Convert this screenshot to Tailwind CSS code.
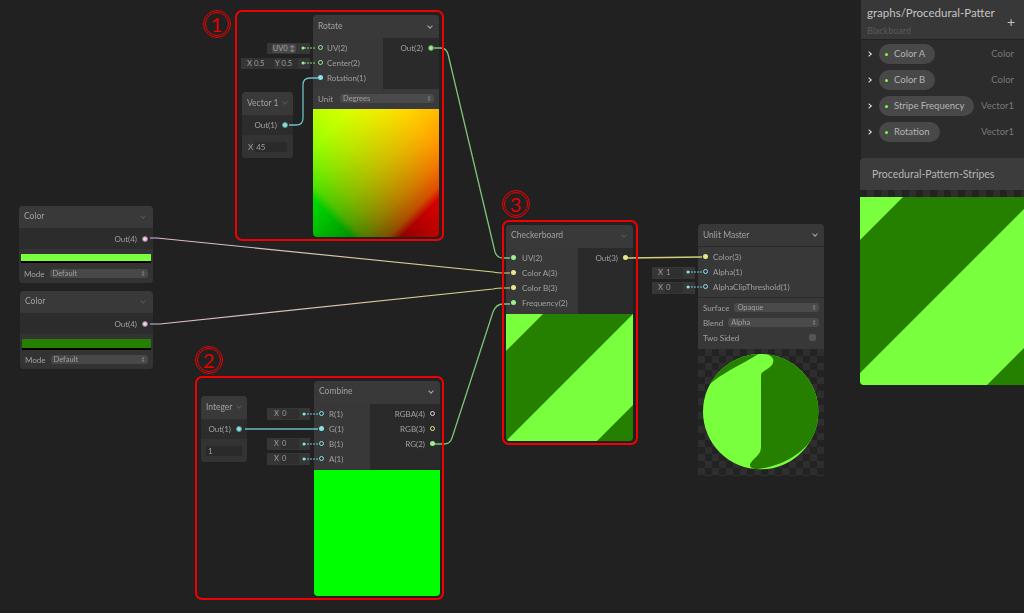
<!DOCTYPE html>
<html lang="en">
<head>
  <meta charset="UTF-8" />
  <title>Procedural Pattern Stripes</title>
  <script src="https://cdn.jsdelivr.net/npm/@tailwindcss/browser@4"></script>
</head>
<body class="bg-[#212121]">
  <div class="relative w-[1024px] h-[613px] overflow-hidden font-['Lato',sans-serif] text-[8px] leading-none text-[#a0a0a0]">

    <!-- Color nodes -->
    <div class="absolute left-[19px] top-[206px] w-[134px] h-[77px] rounded bg-[#2c2c2c] flex flex-col overflow-hidden">
      <div class="h-[22px] shrink-0 bg-[#393939] flex items-center justify-between px-[5px] pb-[1px] text-[8.5px]"><span>Color</span><span class="w-[4px] h-[4px] mr-[3px] mb-[2px] border-r border-b border-[#555] rotate-45"></span></div>
      <div class="h-[21px] shrink-0 flex items-center justify-end gap-[5px] pr-[5px]"><span>Out(4)</span><span class="w-[6px] h-[6px] rounded-full bg-[#f3c9ee] border border-[#8d7689]"></span></div>
      <div class="h-[18px] shrink-0 bg-[#333] px-[2px] pt-[5px]"><div class="h-[9px] bg-[#79ff3d] border-b-2 border-black"></div></div>
      <div class="flex-1 bg-[#333] flex items-center gap-[5px] px-[5px] pb-[3px]"><span>Mode</span><div class="flex-1 h-[9px] rounded-[3px] bg-[#484848] flex items-center justify-between px-[3px] text-[7.5px]"><span>Default</span><span class="text-[5px]">&#8597;</span></div></div>
    </div>
    <div class="absolute left-[20px] top-[291px] w-[133px] h-[78px] rounded bg-[#2c2c2c] flex flex-col overflow-hidden">
      <div class="h-[22px] shrink-0 bg-[#393939] flex items-center justify-between px-[5px] pb-[1px] text-[8.5px]"><span>Color</span><span class="w-[4px] h-[4px] mr-[3px] mb-[2px] border-r border-b border-[#555] rotate-45"></span></div>
      <div class="h-[21px] shrink-0 flex items-center justify-end gap-[5px] pr-[5px]"><span>Out(4)</span><span class="w-[6px] h-[6px] rounded-full bg-[#f3c9ee] border border-[#8d7689]"></span></div>
      <div class="h-[18px] shrink-0 bg-[#333] px-[2px] pt-[5px]"><div class="h-[9px] bg-[#258000] border-b-2 border-black box-content"></div></div>
      <div class="flex-1 bg-[#333] flex items-center gap-[5px] px-[5px] pb-[2px]"><span>Mode</span><div class="flex-1 h-[9px] rounded-[3px] bg-[#484848] flex items-center justify-between px-[3px] text-[7.5px]"><span>Default</span><span class="text-[5px]">&#8597;</span></div></div>
    </div>

    <!-- Vector 1 -->
    <div class="absolute left-[242px] top-[92px] w-[51px] h-[66px] rounded bg-[#2c2c2c] flex flex-col overflow-hidden">
      <div class="h-[23px] shrink-0 bg-[#393939] flex items-center justify-between px-[5px] pb-[1px] text-[8.5px]"><span>Vector 1</span><span class="w-[4px] h-[4px] mr-[1px] mb-[2px] border-r border-b border-[#555] rotate-45"></span></div>
      <div class="h-[20px] shrink-0 flex items-center justify-end gap-[5px] pr-[5px]"><span>Out(1)</span><span class="w-[6px] h-[6px] rounded-full bg-[#84e4e7] border border-[#5a8f91]"></span></div>
      <div class="flex-1 bg-[#333] flex items-center gap-[2px] px-[6px]"><span>X</span><span class="flex-1 h-[10px] bg-[#2a2a2a] flex items-center pl-[1px]">45</span></div>
    </div>

    <!-- Rotate -->
    <div class="absolute left-[313px] top-[15px] w-[126px] h-[222px] rounded bg-[#2a2a2a] flex flex-col overflow-hidden">
      <div class="h-[23px] shrink-0 bg-[#393939] flex items-center justify-between px-[5px] text-[8.5px]"><span>Rotate</span><span class="w-[4px] h-[4px] mr-[2px] mb-[2px] border-r border-b border-[#aaa] rotate-45"></span></div>
      <div class="h-[51px] shrink-0 flex">
        <div class="w-[70px] bg-[#383838] flex flex-col pt-[2px]">
          <div class="h-[15px] flex items-center gap-[4px] pl-[5px]"><span class="w-[5px] h-[5px] rounded-full border border-[#9aef92]"></span><span>UV(2)</span></div>
          <div class="h-[15px] flex items-center gap-[4px] pl-[5px]"><span class="w-[5px] h-[5px] rounded-full border border-[#9aef92]"></span><span>Center(2)</span></div>
          <div class="h-[15px] flex items-center gap-[4px] pl-[5px]"><span class="w-[5px] h-[5px] rounded-full bg-[#84e4e7]"></span><span>Rotation(1)</span></div>
        </div>
        <div class="flex-1 pt-[2px]"><div class="h-[15px] flex items-center justify-end gap-[5px] pr-[5px]"><span>Out(2)</span><span class="w-[6px] h-[6px] rounded-full bg-[#9aef92] border border-[#5f8f5b]"></span></div></div>
      </div>
      <div class="h-[20px] shrink-0 bg-[#3a3a3a] flex items-center gap-[7px] px-[5px] pb-[1px]"><span>Unit</span><div class="flex-1 h-[9px] rounded-[3px] bg-[#4a4a4a] flex items-center justify-between px-[3px] text-[7.5px]"><span>Degrees</span><span class="text-[5px]">&#8597;</span></div></div>
      <div class="relative flex-1 bg-black">
        <div class="absolute inset-0 bg-[linear-gradient(to_top_right,#000_15%,#4d0000_20%,#7d0000_30%,#9f0000_40%,#bb0000_50%,#d10000_60%,#e60000_70%,#f00_85%)]"></div>
        <div class="absolute inset-0 mix-blend-plus-lighter bg-[linear-gradient(to_top_left,#000_15%,#004d00_20%,#007d00_30%,#009f00_40%,#00bb00_50%,#00d100_60%,#00e600_70%,#0f0_85%)]"></div>
      </div>
    </div>

    <!-- Integer -->
    <div class="absolute left-[201px] top-[396px] w-[46px] h-[66px] rounded bg-[#2c2c2c] flex flex-col overflow-hidden">
      <div class="h-[23px] shrink-0 bg-[#393939] flex items-center justify-between px-[5px] pb-[1px] text-[8.5px]"><span>Integer</span><span class="w-[4px] h-[4px] mr-[1px] mb-[2px] border-r border-b border-[#555] rotate-45"></span></div>
      <div class="h-[20px] shrink-0 flex items-center justify-end gap-[5px] pr-[5px]"><span>Out(1)</span><span class="w-[6px] h-[6px] rounded-full bg-[#84e4e7] border border-[#5a8f91]"></span></div>
      <div class="flex-1 bg-[#333] flex items-center px-[5px]"><span class="w-full h-[10px] bg-[#2a2a2a] flex items-center pl-[2px]">1</span></div>
    </div>

    <!-- Combine -->
    <div class="absolute left-[314px] top-[381px] w-[126px] h-[215px] rounded bg-[#2a2a2a] flex flex-col overflow-hidden">
      <div class="h-[23px] shrink-0 bg-[#393939] flex items-center justify-between px-[5px] pb-[2px] text-[8.5px]"><span>Combine</span><span class="w-[4px] h-[4px] mr-[2px] mb-[2px] border-r border-b border-[#aaa] rotate-45"></span></div>
      <div class="h-[66px] shrink-0 flex">
        <div class="w-[56px] bg-[#383838] flex flex-col pt-[2px]">
          <div class="h-[15px] flex items-center gap-[5px] pl-[5px]"><span class="w-[5px] h-[5px] rounded-full border border-[#84e4e7]"></span><span>R(1)</span></div>
          <div class="h-[15px] flex items-center gap-[5px] pl-[5px]"><span class="w-[5px] h-[5px] rounded-full bg-[#84e4e7]"></span><span>G(1)</span></div>
          <div class="h-[15px] flex items-center gap-[5px] pl-[5px]"><span class="w-[5px] h-[5px] rounded-full border border-[#84e4e7]"></span><span>B(1)</span></div>
          <div class="h-[15px] flex items-center gap-[5px] pl-[5px]"><span class="w-[5px] h-[5px] rounded-full border border-[#84e4e7]"></span><span>A(1)</span></div>
        </div>
        <div class="flex-1 flex flex-col pt-[2px]">
          <div class="h-[15px] flex items-center justify-end gap-[5px] pr-[5px]"><span>RGBA(4)</span><span class="w-[5px] h-[5px] rounded-full border border-[#f3c9ee]"></span></div>
          <div class="h-[15px] flex items-center justify-end gap-[5px] pr-[5px]"><span>RGB(3)</span><span class="w-[5px] h-[5px] rounded-full border border-[#e8e88a]"></span></div>
          <div class="h-[15px] flex items-center justify-end gap-[5px] pr-[5px]"><span>RG(2)</span><span class="w-[5px] h-[5px] rounded-full bg-[#9aef92]"></span></div>
        </div>
      </div>
      <div class="flex-1 bg-[#00ff00]"></div>
    </div>

    <!-- Checkerboard -->
    <div class="absolute left-[506px] top-[225px] w-[127px] h-[216px] rounded bg-[#2a2a2a] flex flex-col overflow-hidden">
      <div class="h-[23px] shrink-0 bg-[#393939] flex items-center justify-between px-[5px] pb-[2px] text-[8.5px]"><span>Checkerboard</span><span class="w-[4px] h-[4px] mr-[2px] mb-[2px] border-r border-b border-[#555] rotate-45"></span></div>
      <div class="h-[66px] shrink-0 flex">
        <div class="w-[72px] bg-[#383838] flex flex-col pt-[2px]">
          <div class="h-[15px] flex items-center gap-[6px] pl-[5px]"><span class="w-[5px] h-[5px] rounded-full bg-[#9aef92]"></span><span>UV(2)</span></div>
          <div class="h-[15px] flex items-center gap-[6px] pl-[5px]"><span class="w-[5px] h-[5px] rounded-full bg-[#e8e88a]"></span><span>Color A(3)</span></div>
          <div class="h-[15px] flex items-center gap-[6px] pl-[5px]"><span class="w-[5px] h-[5px] rounded-full bg-[#e8e88a]"></span><span>Color B(3)</span></div>
          <div class="h-[15px] flex items-center gap-[6px] pl-[5px]"><span class="w-[5px] h-[5px] rounded-full bg-[#9aef92]"></span><span>Frequency(2)</span></div>
        </div>
        <div class="flex-1 pt-[2px]"><div class="h-[15px] flex items-center justify-end gap-[5px] pr-[5px]"><span>Out(3)</span><span class="w-[5px] h-[5px] rounded-full bg-[#e8e88a]"></span></div></div>
      </div>
      <svg class="flex-1 block" viewBox="0 0 127 127" preserveAspectRatio="none">
        <rect width="127" height="127" fill="#258000" />
        <polygon points="0,0 37,0 0,37" fill="#79ff3d" />
        <polygon points="127,0 127,91 91,127 0,127" fill="#79ff3d" />
      </svg>
    </div>

    <!-- Unlit Master -->
    <div class="absolute left-[698px] top-[224px] w-[126px] h-[125px] rounded-t bg-[#383838] flex flex-col overflow-hidden">
      <div class="h-[23px] shrink-0 flex items-center justify-between px-[5px] border-b border-[#2a2a2a] text-[8.5px]"><span>Unlit Master</span><span class="w-[4px] h-[4px] mr-[2px] mb-[2px] border-r border-b border-[#aaa] rotate-45"></span></div>
      <div class="h-[51px] shrink-0 flex flex-col border-b border-[#2a2a2a] pt-[2px]">
        <div class="h-[15px] flex items-center gap-[5px] pl-[5px]"><span class="w-[5px] h-[5px] rounded-full bg-[#e8e88a]"></span><span>Color(3)</span></div>
        <div class="h-[15px] flex items-center gap-[5px] pl-[5px]"><span class="w-[5px] h-[5px] rounded-full border border-[#84e4e7]"></span><span>Alpha(1)</span></div>
        <div class="h-[15px] flex items-center gap-[5px] pl-[5px]"><span class="w-[5px] h-[5px] rounded-full border border-[#84e4e7]"></span><span>AlphaClipThreshold(1)</span></div>
      </div>
      <div class="h-[15px] mt-[2px] shrink-0 flex items-center gap-[5px] px-[5px]"><span>Surface</span><div class="flex-1 h-[9px] rounded-[3px] bg-[#4a4a4a] flex items-center justify-between px-[3px] text-[7.5px]"><span>Opaque</span><span class="text-[5px]">&#8597;</span></div></div>
      <div class="h-[15px] shrink-0 flex items-center gap-[5px] px-[5px]"><span>Blend</span><div class="flex-1 h-[9px] rounded-[3px] bg-[#4a4a4a] flex items-center justify-between px-[3px] text-[7.5px]"><span>Alpha</span><span class="text-[5px]">&#8597;</span></div></div>
      <div class="h-[15px] shrink-0 flex items-center justify-between px-[5px]"><span>Two Sided</span><span class="w-[7px] h-[7px] mr-[3px] rounded-[2px] bg-[#555]"></span></div>
    </div>
    <div class="absolute left-[698px] top-[349px] w-[126px] h-[127px] bg-[repeating-conic-gradient(#2e2e2e_0%_25%,#232323_0%_50%)] bg-size-[14px_14px]"></div>
    <svg class="absolute left-[690px] top-[340px]" width="140" height="140" viewBox="0 0 420 420">
      <defs><clipPath id="disc"><circle cx="212" cy="215" r="173" /></clipPath></defs>
      <circle cx="212" cy="215" r="173" fill="#79ff3d" />
      <g clip-path="url(#disc)" fill="#258000">
        <path d="M52 140 C90 100 150 78 205 42 L100 30 L30 100 Z" />
        <path d="M213 105 C215 90 250 85 250 62 C250 52 240 46 225 40 L400 40 L400 240 C365 320 300 378 195 388 C180 385 175 375 185 365 C195 350 213 345 213 320 Z" />
      </g>
    </svg>

    <!-- Inline port fields -->
    <div class="absolute left-[267px] top-[43px] w-[43px] h-[11px] bg-[#363636] flex items-center pl-[5px]"><span class="w-[24px] h-[9px] rounded-[2px] bg-[#4a4a4a] flex items-center justify-center text-[7.5px]">UV0 &#8597;</span></div>
    <div class="absolute left-[241px] top-[58px] w-[69px] h-[11px] bg-[#363636] flex items-center gap-[1px] pl-[6px] text-[7.5px]"><span>X</span><span class="w-[21px] h-[11px] bg-[#2f2f2f] flex items-center pl-[1px]">0.5</span><span>Y</span><span class="w-[17px] h-[11px] bg-[#2f2f2f] flex items-center pl-[1px]">0.5</span></div>
    <div class="absolute left-[267px] top-[408px] w-[43px] h-[12px] bg-[#363636] flex items-center gap-[2px] pl-[7px] text-[7.5px]"><span>X</span><span class="w-[18px] h-[10px] bg-[#2f2f2f] flex items-center pl-[1px]">0</span></div>
    <div class="absolute left-[267px] top-[438px] w-[43px] h-[12px] bg-[#363636] flex items-center gap-[2px] pl-[7px] text-[7.5px]"><span>X</span><span class="w-[18px] h-[10px] bg-[#2f2f2f] flex items-center pl-[1px]">0</span></div>
    <div class="absolute left-[267px] top-[453px] w-[43px] h-[12px] bg-[#363636] flex items-center gap-[2px] pl-[7px] text-[7.5px]"><span>X</span><span class="w-[18px] h-[10px] bg-[#2f2f2f] flex items-center pl-[1px]">0</span></div>
    <div class="absolute left-[652px] top-[267px] w-[43px] h-[12px] bg-[#363636] flex items-center gap-[2px] pl-[6px] text-[7.5px]"><span>X</span><span class="w-[18px] h-[10px] bg-[#2f2f2f] flex items-center pl-[1px]">1</span></div>
    <div class="absolute left-[652px] top-[282px] w-[43px] h-[12px] bg-[#363636] flex items-center gap-[2px] pl-[6px] text-[7.5px]"><span>X</span><span class="w-[18px] h-[10px] bg-[#2f2f2f] flex items-center pl-[1px]">0</span></div>

    <!-- Wires -->
    <svg class="absolute inset-0 pointer-events-none" width="1024" height="613" fill="none">
      <defs>
        <linearGradient id="wireA" gradientUnits="userSpaceOnUse" x1="150" y1="0" x2="510" y2="0"><stop offset="0" stop-color="#dcb8d6" /><stop offset="1" stop-color="#d4d480" /></linearGradient>
      </defs>
      <path d="M434 48 H441 Q446 48 448 54 L495 252 Q497 258 503 258 H510" stroke="#7cc476" stroke-width="1.3" />
      <path d="M289 125 H296 Q303 125 303 118 V85 Q303 78 310 78 H318" stroke="#6bbdc1" stroke-width="1.3" />
      <path d="M150 238 H157 L493 272 Q497 273 503 273 H510" stroke="url(#wireA)" stroke-width="1.2" />
      <path d="M150 324 H160 L493 289 Q497 288 503 288 H510" stroke="url(#wireA)" stroke-width="1.2" />
      <path d="M435 444 H444 Q450 444 452 438 L493 312 Q496 304 503 304 H510" stroke="#7cc476" stroke-width="1.3" />
      <path d="M245 429 H318" stroke="#6bbdc1" stroke-width="1.6" />
      <path d="M628 258 L702 257" stroke="#d0d078" stroke-width="1.6" />
      <g stroke-width="1" stroke-dasharray="2 1">
        <path d="M304 48 H316 M304 63 H316" stroke="#8bd884" />
        <path d="M304 414 H319 M304 444 H319 M304 459 H319 M688 272 H703 M688 287 H703" stroke="#74ccd0" />
      </g>
      <g stroke="none">
        <circle cx="303" cy="48" r="1.5" fill="#9aef92" />
        <circle cx="303" cy="63" r="1.5" fill="#9aef92" />
        <circle cx="304" cy="414" r="1.5" fill="#84e4e7" />
        <circle cx="304" cy="444" r="1.5" fill="#84e4e7" />
        <circle cx="304" cy="459" r="1.5" fill="#84e4e7" />
        <circle cx="688" cy="272" r="1.5" fill="#84e4e7" />
        <circle cx="688" cy="287" r="1.5" fill="#84e4e7" />
      </g>
    </svg>

    <!-- Blackboard -->
    <div class="absolute left-[861px] top-0 w-[163px] h-[158px] bg-[#2c2c2c] flex flex-col">
      <div class="h-[40px] shrink-0 bg-[#383838] border-b border-[#232323] relative pl-[6px] pt-[5px]">
        <div class="whitespace-nowrap text-[11.5px] leading-[16px] text-[#c4c4c4]">graphs/Procedural-Patter</div>
        <div class="mt-[5px] text-[9px] text-[#5a5a5a]">Blackboard</div>
        <span class="absolute left-[146px] top-[15px] text-[14px] leading-none text-[#c4c4c4]">+</span>
      </div>
      <div class="flex flex-col pt-[1px]">
        <div class="h-[26px] flex items-center pl-[6px] pr-[10px]"><span class="w-[4px] h-[4px] mr-[8px] border-t-[1.5px] border-r-[1.5px] border-[#ddd] rotate-45"></span><div class="h-[20px] rounded-full bg-[#484848] flex items-center gap-[6px] pl-[6px] pr-[10px] text-[9.5px] text-[#b4b4b4]"><span class="w-[3px] h-[3px] rounded-full bg-[#79ff3d]"></span>Color A</div><span class="ml-auto text-[9.5px] text-[#777]">Color</span></div>
        <div class="h-[26px] flex items-center pl-[6px] pr-[10px]"><span class="w-[4px] h-[4px] mr-[8px] border-t-[1.5px] border-r-[1.5px] border-[#ddd] rotate-45"></span><div class="h-[20px] rounded-full bg-[#484848] flex items-center gap-[6px] pl-[6px] pr-[10px] text-[9.5px] text-[#b4b4b4]"><span class="w-[3px] h-[3px] rounded-full bg-[#79ff3d]"></span>Color B</div><span class="ml-auto text-[9.5px] text-[#777]">Color</span></div>
        <div class="h-[26px] flex items-center pl-[6px] pr-[10px]"><span class="w-[4px] h-[4px] mr-[8px] border-t-[1.5px] border-r-[1.5px] border-[#ddd] rotate-45"></span><div class="h-[20px] rounded-full bg-[#484848] flex items-center gap-[6px] pl-[6px] pr-[10px] text-[9.5px] text-[#b4b4b4]"><span class="w-[3px] h-[3px] rounded-full bg-[#79ff3d]"></span>Stripe Frequency</div><span class="ml-auto text-[9.5px] text-[#777]">Vector1</span></div>
        <div class="h-[26px] flex items-center pl-[6px] pr-[10px]"><span class="w-[4px] h-[4px] mr-[8px] border-t-[1.5px] border-r-[1.5px] border-[#ddd] rotate-45"></span><div class="h-[20px] rounded-full bg-[#484848] flex items-center gap-[6px] pl-[6px] pr-[10px] text-[9.5px] text-[#b4b4b4]"><span class="w-[3px] h-[3px] rounded-full bg-[#79ff3d]"></span>Rotation</div><span class="ml-auto text-[9.5px] text-[#777]">Vector1</span></div>
      </div>
    </div>

    <!-- Main preview -->
    <div class="absolute left-[860px] top-[158px] w-[164px] h-[227px] flex flex-col">
      <div class="h-[32px] shrink-0 bg-[#3c3c3c] rounded-tl flex items-center pl-[12px] text-[10.5px] text-[#b4b4b4]">Procedural-Pattern-Stripes</div>
      <div class="h-[7px] shrink-0 bg-[repeating-conic-gradient(#2e2e2e_0%_25%,#232323_0%_50%)] bg-size-[14px_14px]"></div>
      <svg class="flex-1 block rounded-bl" viewBox="0 0 164 188" preserveAspectRatio="none">
        <rect width="164" height="188" fill="#258000" />
        <polygon points="0,0 43,0 0,43" fill="#79ff3d" />
        <polygon points="0,176 176,0 315,0 0,315" fill="#79ff3d" />
      </svg>
    </div>

    <!-- Red annotations -->
    <div class="absolute left-[235px] top-[10px] w-[209px] h-[231px] rounded-[7px] border-2 border-[#f00000]"></div>
    <div class="absolute left-[195px] top-[376px] w-[249px] h-[224px] rounded-[7px] border-2 border-[#f00000]"></div>
    <div class="absolute left-[502px] top-[220px] w-[136px] h-[225px] rounded-[7px] border-2 border-[#f00000]"></div>

    <div class="absolute left-[203px] top-[10px] w-[28px] h-[28px] rounded-full border-[1.5px] border-[#f00000] p-[1px]"><div class="w-full h-full rounded-full border border-[#f00000] flex items-center justify-center text-[20px] text-[#f00000]">1</div></div>
    <div class="absolute left-[195px] top-[346px] w-[28px] h-[28px] rounded-full border-[1.5px] border-[#f00000] p-[1px]"><div class="w-full h-full rounded-full border border-[#f00000] flex items-center justify-center text-[20px] text-[#f00000]">2</div></div>
    <div class="absolute left-[502px] top-[190px] w-[28px] h-[28px] rounded-full border-[1.5px] border-[#f00000] p-[1px]"><div class="w-full h-full rounded-full border border-[#f00000] flex items-center justify-center text-[20px] text-[#f00000]">3</div></div>
  </div>
</body>
</html>
